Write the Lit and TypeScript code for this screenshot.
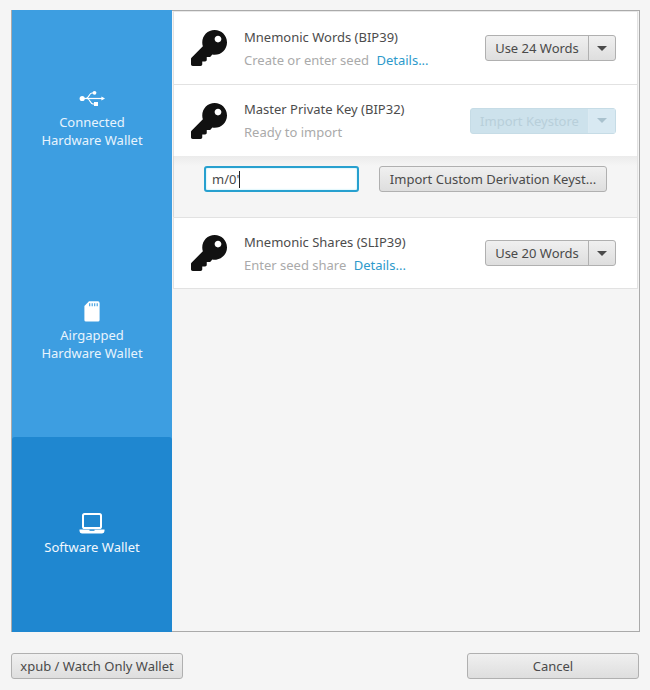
import { LitElement, html, css } from "lit";
import { customElement } from "lit/decorators.js";

const keyPath = "M512 176.001C512 273.203 433.202 352 336 352c-11.22 0-22.19-1.062-32.827-3.069l-24.012 27.014A23.999 23.999 0 0 1 261.223 384H224v40c0 13.255-10.745 24-24 24h-40v40c0 13.255-10.745 24-24 24H24c-13.255 0-24-10.745-24-24v-78.059c0-6.365 2.529-12.47 7.029-16.971l161.802-161.802C163.108 213.814 160 195.271 160 176 160 78.798 238.797.001 335.999 0 433.488-.001 512 78.511 512 176.001zM336 128c0 26.51 21.49 48 48 48s48-21.49 48-48-21.49-48-48-48-48 21.49-48 48z";

const key = html`<svg class="key" viewBox="0 0 512 512"><path fill="#111" d=${keyPath}></path></svg>`;

const usb = html`<svg width="26" height="17" viewBox="0 0 26 17">
  <circle cx="3.2" cy="8.5" r="2.6" fill="#fff"></circle>
  <path d="M3 8.5H23" stroke="#fff" stroke-width="1.2" fill="none"></path>
  <path d="M26 8.5l-3.6-2v4z" fill="#fff"></path>
  <path d="M7 8.5C10 8.5 10 3 13 3H15" stroke="#fff" stroke-width="1.2" fill="none"></path>
  <path d="M8 8.5C11 8.5 11 14 14 14H16" stroke="#fff" stroke-width="1.2" fill="none"></path>
  <circle cx="15.5" cy="2.8" r="1.9" fill="#fff"></circle>
  <rect x="15" y="12" width="4" height="4" fill="#fff"></rect>
</svg>`;

const sd = html`<svg width="16" height="21" viewBox="0 0 16 21">
  <path fill="#fff" d="M5 0.3H14a1.6 1.6 0 0 1 1.6 1.6V19a1.6 1.6 0 0 1-1.6 1.6H2A1.6 1.6 0 0 1 .4 19V5z"></path>
  <path stroke="#3d9ee1" stroke-width="1.1" d="M6.5 2.2v3M9 2.2v3M11.5 2.2v3M14 2.2v3" fill="none" transform="translate(-.8 0)"></path>
</svg>`;

const laptop = html`<svg width="26" height="21" viewBox="0 0 26 21">
  <rect x="4" y="1" width="18" height="14" rx="1.6" fill="none" stroke="#fff" stroke-width="2"></rect>
  <path fill="#fff" d="M0.5 16.6H25.5V18a2.4 2.4 0 0 1-2.4 2.4H2.9A2.4 2.4 0 0 1 .5 18z"></path>
  <rect x="10.5" y="16.6" width="5" height="1.2" fill="#1f87d0"></rect>
</svg>`;

@customElement("app-root")
export class AppRoot extends LitElement {
  static styles = css`
    :host {
      display: block;
      width: 650px;
      height: 690px;
      background: #f5f5f5;
      font-family: "Noto Sans", "Open Sans", sans-serif;
      font-size: 13px;
      color: #4a4a4a;
      box-sizing: border-box;
      padding: 10px 10px 0 11px;
      overflow: hidden;
    }
    .frame {
      display: flex;
      height: 622px;
      box-sizing: border-box;
      border: 1px solid #aaa;
      background: #f5f5f5;
    }
    .side {
      width: 160px;
      flex: none;
      display: flex;
      flex-direction: column;
      color: #e8f4fd;
      background: #3d9ee1;
      margin: -1px 0 -1px 0;
    }
    .nav {
      display: flex;
      flex-direction: column;
      align-items: center;
      justify-content: center;
      text-align: center;
      line-height: 18px;
      font-size: 13px;
    }
    .nav.a { height: 216px; }
    .nav.b { height: 211px; }
    .nav.c {
      height: 195px;
      background: #1f87d0;
      border-radius: 3px 3px 0 0;
      color: #f2f8fd;
    }
    .icon-box {
      height: 21px;
      display: flex;
      align-items: center;
      justify-content: center;
      margin-bottom: 4px;
    }
    .main {
      flex: 1;
      min-width: 0;
      padding: 0 1px 0 1px;
      display: flex;
      flex-direction: column;
    }
    .row {
      display: flex;
      align-items: center;
      background: #fff;
      border-left: 1px solid #e2e2e2;
      border-right: 1px solid #e2e2e2;
      border-bottom: 1px solid #e2e2e2;
      box-sizing: border-box;
      padding-left: 17px;
      padding-right: 21px;
    }
    .row.one { height: 74px; border-top: 1px solid #e8e8e8; }
    .row.two { height: 71px; border-bottom: none; }
    .row.three { height: 72px; border-top: 1px solid #e2e2e2; }
    .key { width: 36px; height: 36px; flex: none; margin-right: 17px; }
    .text { flex: 1; min-width: 0; }
    .title { line-height: 18px; margin-bottom: 5px; color: #4c4c4c; }
    .sub { line-height: 18px; color: #aaa; }
    .sub a { color: #2e9acb; margin-left: 4px; text-decoration: none; }
    .expand {
      height: 61px;
      box-sizing: border-box;
      display: flex;
      gap: 20px;
      padding: 10px 0 0 30px;
      align-items: flex-start;
      border-left: 1px solid #d8d8d8;
      border-right: 1px solid #e2e2e2;
      background: linear-gradient(#ebebeb, #f5f5f5 10px);
    }
    .input {
      width: 155px;
      height: 26px;
      box-sizing: border-box;
      border: 2px solid #27a0cf;
      border-radius: 3px;
      background: #fff;
      color: #4a4a4a;
      padding: 0 6px;
      display: flex;
      align-items: center;
      box-shadow: inset 0 0 2px #9fe3f2;
    }
    .caret {
      width: 1px;
      height: 17px;
      background: #222;
    }
    .btn {
      box-sizing: border-box;
      height: 26px;
      border: 1px solid #b0b0b0;
      border-radius: 3px;
      background: linear-gradient(#f0f0f0, #dedede);
      color: #4a4a4a;
      display: flex;
      align-items: center;
      justify-content: center;
      font-size: 13px;
      white-space: nowrap;
    }
    .custom { width: 228px; }
    .split {
      display: flex;
      box-sizing: border-box;
      height: 26px;
      border: 1px solid #b0b0b0;
      border-radius: 3px;
      background: linear-gradient(#f0f0f0, #dedede);
      flex: none;
      align-items: stretch;
    }
    .split .label {
      display: flex;
      align-items: center;
      justify-content: center;
      width: 102px;
      border-right: 1px solid #b0b0b0;
    }
    .split .arrow {
      width: 26px;
      display: flex;
      align-items: center;
      justify-content: center;
    }
    .tri {
      width: 0;
      height: 0;
      border-left: 5px solid transparent;
      border-right: 5px solid transparent;
      border-top: 5px solid #4a4a4a;
    }
    .split.off {
      background: #cde2ec;
      border-color: #c6dce6;
      color: #b8cfda;
    }
    .split.off .label { width: 117px; border-right-color: #dbeaf2; }
    .split.off .arrow { background: #d8e9f2; }
    .split.off .tri { border-top-color: #a9c2ce; }
    .foot {
      display: flex;
      justify-content: space-between;
      padding: 21px 0 0 0;
      width: 628px;
    }
    .foot .btn { width: 172px; }
  `;

  render() {
    return html`
      <div class="frame">
        <div class="side">
          <div class="nav a"><div class="icon-box">${usb}</div><div>Connected<br />Hardware Wallet</div></div>
          <div class="nav b"><div class="icon-box">${sd}</div><div>Airgapped<br />Hardware Wallet</div></div>
          <div class="nav c"><div class="icon-box">${laptop}</div><div>Software Wallet</div></div>
        </div>
        <div class="main">
          <div class="row one">
            ${key}
            <div class="text">
              <div class="title">Mnemonic Words (BIP39)</div>
              <div class="sub">Create or enter seed <a>Details...</a></div>
            </div>
            <div class="split">
              <div class="label">Use 24 Words</div>
              <div class="arrow"><div class="tri"></div></div>
            </div>
          </div>
          <div class="row two">
            ${key}
            <div class="text">
              <div class="title">Master Private Key (BIP32)</div>
              <div class="sub">Ready to import</div>
            </div>
            <div class="split off">
              <div class="label">Import Keystore</div>
              <div class="arrow"><div class="tri"></div></div>
            </div>
          </div>
          <div class="expand">
            <div class="input"><span>m/0'</span><span class="caret"></span></div>
            <div class="btn custom">Import Custom Derivation Keyst...</div>
          </div>
          <div class="row three">
            ${key}
            <div class="text">
              <div class="title">Mnemonic Shares (SLIP39)</div>
              <div class="sub">Enter seed share <a>Details...</a></div>
            </div>
            <div class="split">
              <div class="label">Use 20 Words</div>
              <div class="arrow"><div class="tri"></div></div>
            </div>
          </div>
        </div>
      </div>
      <div class="foot">
        <div class="btn">xpub / Watch Only Wallet</div>
        <div class="btn">Cancel</div>
      </div>
    `;
  }
}
